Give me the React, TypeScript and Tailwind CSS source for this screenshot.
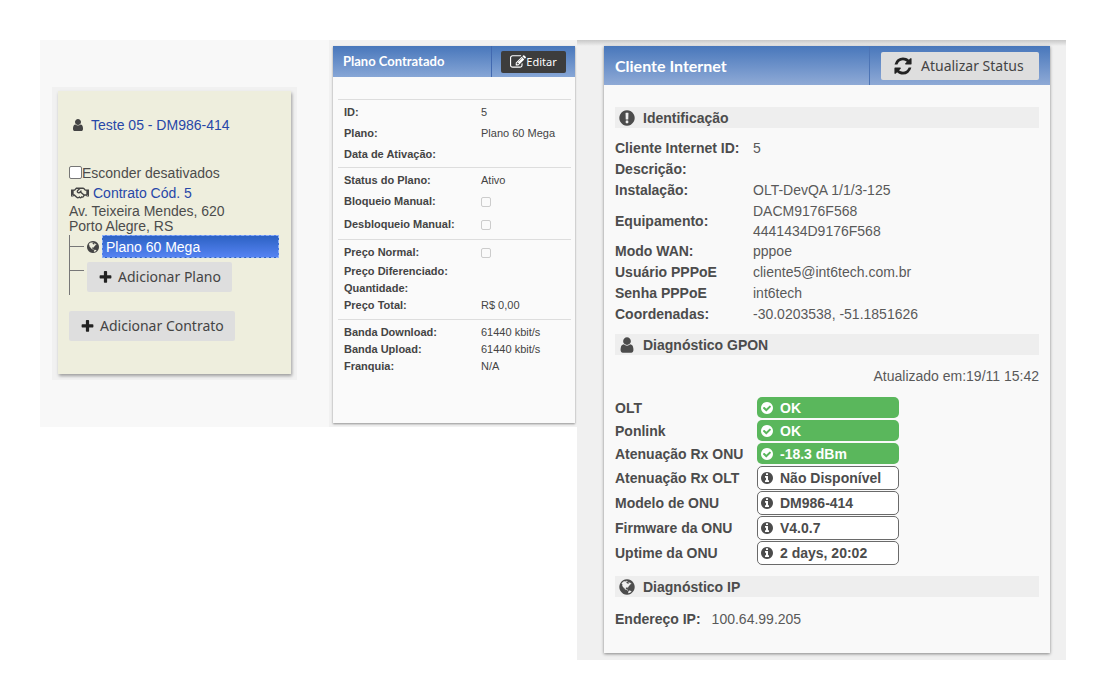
import type { ReactNode } from "react";
import { FaRegHandshake } from "react-icons/fa";

const paths = {
  user: "M1536 1399q0 109-62.5 187t-150.5 78h-854q-88 0-150.5-78t-62.5-187q0-85 8.5-160.5t31.5-152 58.5-131 94-89 134.5-34.5q131 128 313 128t313-128q76 0 134.5 34.5t94 89 58.5 131 31.5 152 8.5 160.5zm-256-887q0 159-112.5 271.5t-271.5 112.5-271.5-112.5-112.5-271.5 112.5-271.5 271.5-112.5 271.5 112.5 112.5 271.5z",
  edit: "M888 1184l116-116-152-152-116 116v56h96v96h56zm440-720q-16-16-33 1l-350 350q-17 17-1 33t33-1l350-350q17-17 1-33zm80 594v190q0 119-84.5 203.5t-203.5 84.5h-832q-119 0-203.5-84.5t-84.5-203.5v-832q0-119 84.5-203.5t203.5-84.5h832q63 0 117 25 15 7 18 23 3 17-9 29l-49 49q-14 14-32 8-23-6-45-6h-832q-66 0-113 47t-47 113v832q0 66 47 113t113 47h832q66 0 113-47t47-113v-126q0-13 9-22l64-64q15-15 35-7t20 29zm-96-738l288 288-672 672h-288v-288zm444 132l-92 92-288-288 92-92q28-28 68-28t68 28l152 152q28 28 28 68t-28 68z",
  plus: "M1600 736v192q0 40-28 68t-68 28h-416v416q0 40-28 68t-68 28h-192q-40 0-68-28t-28-68v-416h-416q-40 0-68-28t-28-68v-192q0-40 28-68t68-28h416v-416q0-40 28-68t68-28h192q40 0 68 28t28 68v416h416q40 0 68 28t28 68z",
  refresh:
    "M1639 1056q0 5-1 7-64 268-268 434.5t-478 166.5q-146 0-282.5-55t-243.5-157l-129 129q-19 19-45 19t-45-19-19-45v-448q0-26 19-45t45-19h448q26 0 45 19t19 45-19 45l-137 137q71 66 161 102t187 36q134 0 250-65t186-179q11-17 53-117 8-23 30-23h192q13 0 22.5 9.5t9.5 22.5zm25-800v448q0 26-19 45t-45 19h-448q-26 0-45-19t-19-45 19-45l138-138q-148-137-349-137-134 0-250 65t-186 179q-11 17-53 117-8 23-30 23h-199q-13 0-22.5-9.5t-9.5-22.5v-7q65-268 270-434.5t480-166.5q146 0 284 55.5t245 156.5l130-129q19-19 45-19t45 19 19 45z",
  alert:
    "M896 128q209 0 385.5 103t279.5 279.5 103 385.5-103 385.5-279.5 279.5-385.5 103-385.5-103-279.5-279.5-103-385.5 103-385.5 279.5-279.5 385.5-103zm128 1247v-190q0-14-9-23.5t-22-9.5h-192q-13 0-23 10t-10 23v190q0 13 10 23t23 10h192q13 0 22-9.5t9-23.5zm-2-344l18-621q0-12-10-18-10-8-24-8h-220q-14 0-24 8-10 6-10 18l17 621q0 10 10 17.5t24 7.5h185q14 0 23.5-7.5t10.5-17.5z",
  info: "M1152 1376v-160q0-14-9-23t-23-9h-96v-512q0-14-9-23t-23-9h-320q-14 0-23 9t-9 23v160q0 14 9 23t23 9h96v320h-96q-14 0-23 9t-9 23v160q0 14 9 23t23 9h448q14 0 23-9t9-23zm-128-896v-160q0-14-9-23t-23-9h-192q-14 0-23 9t-9 23v160q0 14 9 23t23 9h192q14 0 23-9t9-23zm640 416q0 209-103 385.5t-279.5 279.5-385.5 103-385.5-103-279.5-279.5-103-385.5 103-385.5 279.5-279.5 385.5-103 385.5 103 279.5 279.5 103 385.5z",
  check:
    "M1412 734q0-28-18-46l-91-90q-19-19-45-19t-45 19l-408 407-226-226q-19-19-45-19t-45 19l-91 90q-18 18-18 46 0 27 18 45l362 362q19 19 45 19 27 0 46-19l543-543q18-18 18-45zm252 162q0 209-103 385.5t-279.5 279.5-385.5 103-385.5-103-279.5-279.5-103-385.5 103-385.5 279.5-279.5 385.5-103 385.5 103 279.5 279.5 103 385.5z",
  globe:
    "M896 128q209 0 385.5 103t279.5 279.5 103 385.5-103 385.5-279.5 279.5-385.5 103-385.5-103-279.5-279.5-103-385.5 103-385.5 279.5-279.5 385.5-103zm274 521q-2 1-9.5 9.5t-13.5 9.5q2 0 4.5-5t5-11 3.5-7q6-7 22-15 14-6 52-12 34-8 51 11-2-2 9.5-13t14.5-12q3-2 15-4.5t15-7.5l2-22q-12 1-17.5-7t-6.5-21q0 2-6 8 0-7-4.5-8t-11.5 1-9 1q-10-3-15-7.5t-8-16.5-4-15q-2-5-9.5-11t-9.5-10q-1-2-2.5-5.5t-3-6.5-4-5.5-5.5-2.5-7 5-7.5 10-4.5 5q-3-2-6-1.5t-4.5 1-4.5 3-5 3.5q-3 2-8.5 3t-8.5 2q15-5-1-11-10-4-16-3 9-4 7.5-12t-8.5-14h5q-1-4-8.5-8.5t-17.5-8.5-13-6q-8-5-34-9.5t-33-.5q-5 6-4.5 10.5t4 14 3.5 12.5q1 6-5.5 13t-6.5 12q0 7 14 15.5t10 21.5q-3 8-16 16t-16 12q-5 8-1.5 18.5t10.5 16.5q2 2 1.5 4t-3.5 4.5-5.5 4-6.5 3.5l-3 2q-11 5-20.5-6t-13.5-26q-7-25-16-30-23-8-29 1-5-13-41-26-25-9-58-4 6-1 0-15-7-15-19-12 3-6 4-17.5t1-13.5q3-13 12-23 1-1 7-8.5t9.5-13.5.5-6q35 4 50-11 5-5 11.5-17t10.5-17q9-6 14-5.5t14.5 5.5 14.5 5q14 1 15.5-11t-7.5-20q12 1 3-17-4-7-8-9-12-4-27 5-8 4 2 8-1-1-9.5 10.5t-16.5 17.5-16-5q-1-1-5.5-13.5t-9.5-13.5q-8 0-16 15 3-8-11-15t-24-8q19-12-8-27-7-4-20.5-5t-19.5 4q-5 7-5.5 11.5t5 8 10.5 5.5 11.5 4 8.5 3q14 10 8 14-2 1-8.5 3.5t-11.5 4.5-6 4q-3 4 0 14t-2 14q-5-5-9-17.5t-7-16.5q7 9-25 6l-10-1q-4 0-16 2t-20.5 1-13.5-8q-4-8 0-20 1-4 4-2-4-3-11-9.5t-10-8.5q-46 15-94 41 6 1 12-1 5-2 13-6.5t10-5.5q34-14 42-7l5-5q14 16 20 25-7-4-30-1-20 6-22 12 7 12 5 18-4-3-11.5-10t-14.5-11-15-5q-16 0-22 1-146 80-235 222 7 7 12 8 4 1 5 9t2.5 11 11.5-3q9 8 3 19 1-1 44 27 19 17 21 21 3 11-10 18-1-2-9-9t-9-4q-3 5 .5 18.5t10.5 12.5q-7 0-9.5 16t-2.5 35.5-1 23.5l2 1q-3 12 5.5 34.5t21.5 19.5q-13 3 20 43 6 8 8 9 3 2 12 7.5t15 10 10 10.5q4 5 10 22.5t14 23.5q-2 6 9.5 20t10.5 23q-1 0-2.5 1t-2.5 1q3 7 15.5 14t15.5 13q1 3 2 10t3 11 8 2q2-20-24-62-15-25-17-29-3-5-5.5-15.5t-4.5-14.5q2 0 6 1.5t8.5 3.5 7.5 4 2 3q-3 7 2 17.5t12 18.5 17 19 12 13q6 6 14 19.5t0 13.5q9 0 20 10.5t17 19.5q5 8 8 26t5 24q2 7 8.5 13.5t12.5 9.5l16 8 13 7q5 2 18.5 10.5t21.5 11.5q10 4 16 4t14.5-2.5 13.5-3.5q15-2 29 15t21 21q36 19 55 11-2 1 .5 7.5t8 15.5 9 14.5 5.5 8.5q5 6 18 15t18 15q6-4 7-9-3 8 7 20t18 10q14-3 14-32-31 15-49-18 0-1-2.5-5.5t-4-8.5-2.5-8.5 0-7.5 5-3q9 0 10-3.5t-2-12.5-4-13q-1-8-11-20t-12-15q-5 9-16 8t-16-9q0 1-1.5 5.5t-1.5 6.5q-13 0-15-1 1-3 2.5-17.5t3.5-22.5q1-4 5.5-12t7.5-14.5 4-12.5-4.5-9.5-17.5-2.5q-19 1-26 20-1 3-3 10.5t-5 11.5-9 7q-7 3-24 2t-24-5q-13-8-22.5-29t-9.5-37q0-10 2.5-26.5t3-25-5.5-24.5q3-2 9-9.5t10-10.5q2-1 4.5-1.5t4.5 0 4-1.5 3-6q-1-1-4-3-3-3-4-3 7 3 28.5-1.5t27.5 1.5q15 11 22-2 0-1-2.5-9.5t-.5-13.5q5 27 29 9 3 3 15.5 5t17.5 5q3 2 7 5.5t5.5 4.5 5-.5 8.5-6.5q10 14 12 24 11 40 19 44 7 3 11 2t4.5-9.5 0-14-1.5-12.5l-1-8v-18l-1-8q-15-3-18.5-12t1.5-18.5 15-18.5q1-1 8-3.5t15.5-6.5 12.5-8q21-19 15-35 7 0 11-9-1 0-5-3t-7.5-5-4.5-2q9-5 2-16 5-3 7.5-11t7.5-10q9 12 21 2 8-8 1-16 5-7 20.5-10.5t18.5-9.5q7 2 8-2t1-12 3-12q4-5 15-9t13-5l17-11q3-4 0-4 18 2 31-11 10-11-6-20 3-6-3-9.5t-15-5.5q3-1 11.5-.5t10.5-1.5q15-10-7-16-17-5-43 12zm-163 877q206-36 351-189-3-3-12.5-4.5t-12.5-3.5q-18-7-24-8 1-7-2.5-13t-8-9-12.5-8-11-7q-2-2-7-6t-7-5.5-7.5-4.5-8.5-2-10 1l-3 1q-3 1-5.5 2.5t-5.5 3-4 3 0 2.5q-21-17-36-22-5-1-11-5.5t-10.5-7-10-1.5-11.5 7q-5 5-6 15t-2 13q-7-5 0-17.5t2-18.5q-3-6-10.5-4.5t-12 4.5-11.5 8.5-9 6.5-8.5 5.5-8.5 7.5q-3 4-6 12t-5 11q-2-4-11.5-6.5t-9.5-5.5q2 10 4 35t5 38q7 31-12 48-27 25-29 40-4 22 12 26 0 7-8 20.5t-7 21.5q0 6 2 16z",
};

type IconName = keyof typeof paths;

function Icon({ name, className }: { name: IconName; className: string }) {
  return (
    <svg viewBox="0 0 1792 1792" fill="currentColor" aria-hidden="true" className={`shrink-0 ${className}`}>
      <path d={paths[name]} />
    </svg>
  );
}

function AddButton({ children }: { children: ReactNode }) {
  return (
    <button
      type="button"
      className="flex h-[30px] items-center gap-[5px] rounded-xs bg-[#dedede] px-[11px] font-['Noto_Sans',sans-serif] text-sm whitespace-nowrap text-[#444]"
    >
      <Icon name="plus" className="size-[15px] text-[#222]" />
      {children}
    </button>
  );
}

function ClientTree() {
  return (
    <section className="mx-3 mt-[47px] border-x-[6px] border-t-4 border-b-[6px] border-[#f1f1f1]">
      <div className="bg-[#eeeedd] pr-3 pl-[11px] pb-[33px] shadow-[1px_2px_3px_rgba(0,0,0,0.35)]">
        <div className="flex h-[67px] items-center gap-1.5 pl-0.5">
          <Icon name="user" className="size-[14px] text-[#444]" />
          <a href="#cliente" className="text-[#2747a8]">
            Teste 05 - DM986-414
          </a>
        </div>
        <label className="mt-1 flex h-[21px] items-center">
          <input
            type="checkbox"
            className="size-[13px] appearance-none rounded-[2px] border border-[#767676] bg-white"
          />
          Esconder desativados
        </label>
        <div className="flex h-5 items-center gap-1 pl-0.5">
          <FaRegHandshake className="size-[18px] text-[#444]" aria-hidden="true" />
          <a href="#contrato" className="text-[#2747a8]">
            Contrato Cód. 5
          </a>
        </div>
        <address className="pt-px pb-px leading-[15px] not-italic">
          Av. Teixeira Mendes, 620
          <br />
          Porto Alegre, RS
        </address>
        <ul className="border-l border-[#777]">
          <li className="flex h-[23px] items-center">
            <span className="h-px w-[14px] bg-[#777]" />
            <Icon name="globe" className="mr-0.5 ml-0.5 size-[14px] text-[#444]" />
            <a
              href="#plano"
              className="flex h-[23px] flex-1 items-center border border-dashed border-[#8fb0f5] bg-linear-to-b from-[#2c62c4] to-[#5583f2] px-[3px] text-white"
            >
              Plano 60 Mega
            </a>
          </li>
          <li className="flex items-start pt-1 pb-[3px]">
            <span className="mt-2 mr-[3px] h-px w-[14px] bg-[#777]" />
            <AddButton>Adicionar Plano</AddButton>
          </li>
        </ul>
        <div className="mt-4">
          <AddButton>Adicionar Contrato</AddButton>
        </div>
      </div>
    </section>
  );
}

type PlanRow = { label: string; value?: string; checkbox?: string; height: string };

const planGroups: { pad: string; rows: PlanRow[] }[] = [
  {
    pad: "pt-0.5 pb-0.5",
    rows: [
      { label: "ID:", value: "5", height: "h-[21px]" },
      { label: "Plano:", value: "Plano 60 Mega", height: "h-[21px]" },
      { label: "Data de Ativação:", height: "h-[21px]" },
    ],
  },
  {
    pad: "pt-0.5 pb-0.5",
    rows: [
      { label: "Status do Plano:", value: "Ativo", height: "h-[21px]" },
      { label: "Bloqueio Manual:", checkbox: "bloqueio", height: "h-[21px]" },
      { label: "Desbloqueio Manual:", checkbox: "desbloqueio", height: "h-[25px]" },
    ],
  },
  {
    pad: "pt-0.5 pb-[5px]",
    rows: [
      { label: "Preço Normal:", checkbox: "preco-normal", height: "h-[21px]" },
      { label: "Preço Diferenciado:", height: "h-[17px]" },
      { label: "Quantidade:", height: "h-[17px]" },
      { label: "Preço Total:", value: "R$ 0,00", height: "h-[17px]" },
    ],
  },
  {
    pad: "pt-1",
    rows: [
      { label: "Banda Download:", value: "61440 kbit/s", height: "h-[17px]" },
      { label: "Banda Upload:", value: "61440 kbit/s", height: "h-[17px]" },
      { label: "Franquia:", value: "N/A", height: "h-[17px]" },
    ],
  },
];

function PlanCard() {
  return (
    <section className="bg-[#f1f1f1] pt-1.5 pr-0.5 pb-1 pl-1">
      <div className="bg-[#fafafa] pb-12 shadow-[0_1px_2px_rgba(0,0,0,0.4)]">
        <header className="flex h-[31px] bg-linear-to-b from-[#4877bb] to-[#87a6d6]">
          <h2 className="flex flex-1 items-center border-r border-[#4269b0] pl-2.5 font-[Lato,sans-serif] text-[13px] font-bold whitespace-nowrap text-white">
            Plano Contratado
          </h2>
          <div className="flex items-center pr-[9px] pl-[9px]">
            <button
              type="button"
              className="flex h-[22px] w-[65px] items-center justify-center rounded-xs bg-[#3d3d3d] font-['Noto_Sans',sans-serif] text-[11px] text-white"
            >
              <Icon name="edit" className="size-4" />
              Editar
            </button>
          </div>
        </header>
        <div className="pt-[22px] pr-1 pl-[5px] text-[11px] text-[#444]">
          {planGroups.map((group, i) => (
            <div key={i} className={`border-t border-[#ddd] ${group.pad}`}>
              {group.rows.map((row) => (
                <div key={row.label} className={`grid grid-cols-[137px_1fr] items-center pl-1.5 ${row.height}`}>
                  {row.checkbox ? (
                    <label htmlFor={row.checkbox} className="font-bold">
                      {row.label}
                    </label>
                  ) : (
                    <span className="font-bold">{row.label}</span>
                  )}
                  {row.checkbox ? (
                    <input
                      id={row.checkbox}
                      type="checkbox"
                      disabled
                      className="size-[10px] appearance-none rounded-[2px] border border-[#ccc] bg-[#fafafa]"
                    />
                  ) : (
                    <span>{row.value}</span>
                  )}
                </div>
              ))}
            </div>
          ))}
        </div>
      </div>
    </section>
  );
}

const identity: [string, string[]][] = [
  ["Cliente Internet ID:", ["5"]],
  ["Descrição:", []],
  ["Instalação:", ["OLT-DevQA 1/1/3-125"]],
  ["Equipamento:", ["DACM9176F568", "4441434D9176F568"]],
  ["Modo WAN:", ["pppoe"]],
  ["Usuário PPPoE", ["cliente5@int6tech.com.br"]],
  ["Senha PPPoE", ["int6tech"]],
  ["Coordenadas:", ["-30.0203538, -51.1851626"]],
];

const diagnostics: { label: string; value: string; ok: boolean }[] = [
  { label: "OLT", value: "OK", ok: true },
  { label: "Ponlink", value: "OK", ok: true },
  { label: "Atenuação Rx ONU", value: "-18.3 dBm", ok: true },
  { label: "Atenuação Rx OLT", value: "Não Disponível", ok: false },
  { label: "Modelo de ONU", value: "DM986-414", ok: false },
  { label: "Firmware da ONU", value: "V4.0.7", ok: false },
  { label: "Uptime da ONU", value: "2 days, 20:02", ok: false },
];

function SectionTitle({ icon, children }: { icon: IconName; children: ReactNode }) {
  return (
    <h3 className="flex h-[21px] items-center gap-[7px] bg-[#eee] pl-[3px] font-bold">
      <Icon name={icon} className="size-[18px]" />
      {children}
    </h3>
  );
}

function ClientCard() {
  return (
    <section className="bg-[#f0f0f0] pr-4 pb-[7px] pl-[27px]">
      <div className="-mr-4 -ml-[27px] h-1.5 bg-linear-to-b from-[#c8c8c8] to-[#f0f0f0]" />
      <div className="bg-[#f9f9f9] pb-6 text-[#4c4c4c] shadow-[0_1px_3px_rgba(0,0,0,0.45)]">
        <header className="flex h-[39px] bg-linear-to-b from-[#4877bb] to-[#8faad6]">
          <h2 className="flex flex-1 items-center border-r border-[#4c74b5] pl-[11px] font-[Lato,sans-serif] text-base font-bold whitespace-nowrap text-white">
            Cliente Internet
          </h2>
          <div className="flex items-center px-[11px]">
            <button
              type="button"
              className="flex h-7 w-[158px] items-center gap-2 rounded-xs bg-[#dedede] pl-3 font-['Noto_Sans',sans-serif] text-sm whitespace-nowrap text-[#444]"
            >
              <Icon name="refresh" className="size-5 text-[#222]" />
              Atualizar Status
            </button>
          </div>
        </header>
        <div className="px-[11px] pt-[22px]">
          <SectionTitle icon="alert">Identificação</SectionTitle>
          <table className="mt-2.5 w-full text-left">
            <tbody>
              {identity.map(([label, lines]) => (
                <tr key={label}>
                  <th scope="row" className="w-[138px] p-0 leading-[21px] font-bold whitespace-nowrap">
                    {label}
                  </th>
                  <td className={`p-0 text-[#595959] ${lines.length > 1 ? "leading-5" : "leading-[21px]"}`}>
                    {lines.map((line) => (
                      <div key={line}>{line}</div>
                    ))}
                  </td>
                </tr>
              ))}
            </tbody>
          </table>
          <div className="mt-[9px]">
            <SectionTitle icon="user">Diagnóstico GPON</SectionTitle>
          </div>
          <p className="mt-[11px] text-right leading-5 text-[#595959]">Atualizado em:19/11 15:42</p>
          <table className="mt-2.5 w-full text-left">
            <tbody>
              {diagnostics.map((row) => (
                <tr key={row.label} className={row.ok ? "h-[23px]" : "h-[25px]"}>
                  <th scope="row" className="w-[142px] p-0 font-bold whitespace-nowrap">
                    {row.label}
                  </th>
                  <td className="p-0">
                    <span
                      className={`flex w-[142px] items-center gap-1.5 rounded-[5px] font-bold whitespace-nowrap ${
                        row.ok ? "h-[21px] bg-[#5ab75c] pl-[3px] text-white" : "h-6 border border-[#6a6a6a] bg-white pl-0.5"
                      }`}
                    >
                      <Icon name={row.ok ? "check" : "info"} className="size-[14px]" />
                      {row.value}
                    </span>
                  </td>
                </tr>
              ))}
            </tbody>
          </table>
          <div className="mt-[11px]">
            <SectionTitle icon="globe">Diagnóstico IP</SectionTitle>
          </div>
          <p className="mt-3 flex gap-[11px] leading-5">
            <strong>Endereço IP:</strong>
            <span className="text-[#595959]">100.64.99.205</span>
          </p>
        </div>
      </div>
    </section>
  );
}

export default function App() {
  return (
    <main className="flex min-h-screen items-start bg-white py-10 pr-[38px] pl-10 font-['Liberation_Sans',sans-serif] text-sm text-[#4c4c4c]">
      <div className="grid flex-[537_1_0%] grid-cols-[289fr_248fr]">
        <div className="bg-[#f8f8f8] pr-[20px]">
          <ClientTree />
        </div>
        <PlanCard />
      </div>
      <div className="min-w-0 flex-[489_1_0%]">
        <ClientCard />
      </div>
    </main>
  );
}
